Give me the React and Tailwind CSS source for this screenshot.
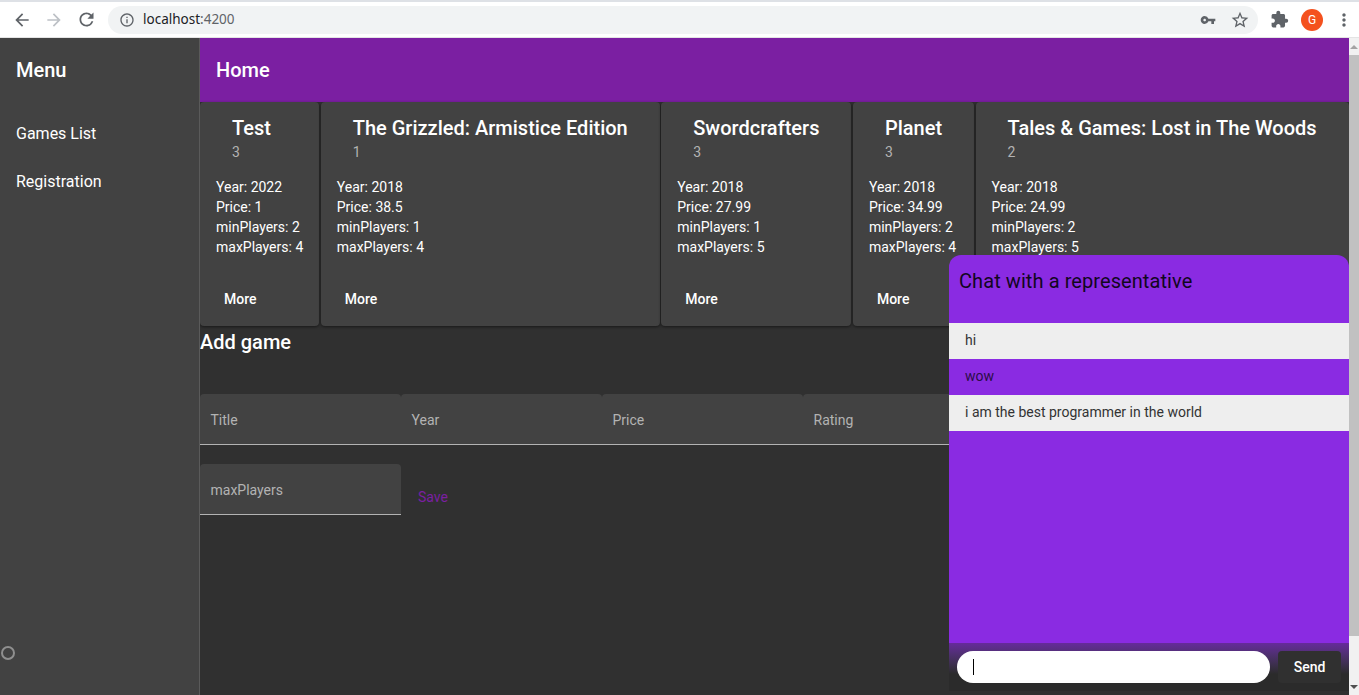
import React from 'react';
import { MdArrowBack, MdArrowForward, MdRefresh, MdInfoOutline, MdVpnKey, MdStarBorder, MdExtension, MdMoreVert } from 'react-icons/md';

const games = [
  { title: 'Test', rating: 3, year: 2022, price: 1, min: 2, max: 4 },
  { title: 'The Grizzled: Armistice Edition', rating: 1, year: 2018, price: 38.5, min: 1, max: 4 },
  { title: 'Swordcrafters', rating: 3, year: 2018, price: 27.99, min: 1, max: 5 },
  { title: 'Planet', rating: 3, year: 2018, price: 34.99, min: 2, max: 4 },
  { title: 'Tales & Games: Lost in The Woods', rating: 2, year: 2018, price: 24.99, min: 2, max: 5 },
];

function BrowserBar() {
  return (
    <div className="h-[38px] shrink-0 bg-white border-t-2 border-b border-t-[#dee1e6] border-b-[#e4e4e4] flex items-center text-[#5f6368]">
      <MdArrowBack className="ml-[12px] text-[20px]" />
      <MdArrowForward className="ml-[12px] text-[20px] text-[#bdc1c6]" />
      <MdRefresh className="ml-[12px] text-[21px]" />
      <div className="ml-[11px] w-[1150px] h-[28px] bg-[#f1f3f4] rounded-full flex items-center pl-[11px] pr-[8px]">
        <MdInfoOutline className="text-[16px]" />
        <span className="ml-[8px] text-[13.5px] font-['Noto_Sans',sans-serif] text-[#202124]">
          localhost<span className="text-[#5f6368]">:4200</span>
        </span>
        <MdVpnKey className="ml-auto text-[16px]" />
        <MdStarBorder className="ml-[14px] text-[20px]" />
      </div>
      <MdExtension className="ml-[12px] text-[19px]" />
      <div className="ml-[12px] w-[22px] h-[22px] rounded-full bg-[#f4511e] text-white text-[12px] flex items-center justify-center font-['Roboto',sans-serif]">G</div>
      <MdMoreVert className="ml-[11px] text-[20px]" />
    </div>
  );
}

function Sidebar() {
  return (
    <aside className="relative w-[200px] shrink-0 bg-[#424242] border-r border-[#5a5a5a] text-white">
      <div className="h-[64px] flex items-center px-4 text-[20px] font-medium">Menu</div>
      <nav className="pt-2 text-[16px]">
        <div className="h-[48px] flex items-center px-4">Games List</div>
        <div className="h-[48px] flex items-center px-4">Registration</div>
      </nav>
      <div className="absolute left-[1px] top-[608px] w-[14px] h-[14px] rounded-full border-2 border-[#8f8f8f]"></div>
    </aside>
  );
}

function GameCard({ game, last }) {
  return (
    <div className={`h-[224px] bg-[#424242] rounded-[4px] shadow-[0_1px_3px_rgba(0,0,0,0.5)] p-4 pt-[14px] flex flex-col ${last ? 'flex-1' : ''}`}>
      <div className="ml-4 pr-4 whitespace-nowrap">
        <div className="text-[20px] leading-[24px] font-medium text-white">{game.title}</div>
        <div className="mt-[2px] text-[14px] leading-[20px] text-[#b3b3b3]">{game.rating}</div>
      </div>
      <div className="mt-[15px] text-[14px] leading-[20px] text-white whitespace-nowrap">
        <div>Year: {game.year}</div>
        <div>Price: {game.price}</div>
        <div>minPlayers: {game.min}</div>
        <div>maxPlayers: {game.max}</div>
      </div>
      <div className="mt-auto mb-[-7px] pl-2 h-[36px] flex items-center text-[14px] font-medium text-white">More</div>
    </div>
  );
}

function Field({ label }) {
  return (
    <div className="w-[201px] h-[51px] shrink-0 bg-[#424242] rounded-t-[4px] border-b border-[#b3b3b3] flex items-center px-[10.5px] pt-[3px] text-[14px] text-[#b3b3b3]">
      {label}
    </div>
  );
}

function Chat() {
  return (
    <div className="absolute left-[749px] top-[217px] w-[400px] h-[436px] rounded-t-[12px] bg-[#8a2be2] flex flex-col overflow-hidden">
      <div className="h-[68px] shrink-0 pl-[10px] pt-[12px] text-[20px] leading-[28px] tracking-[0.08px] text-[#12061e]">Chat with a representative</div>
      <div className="flex-1 text-[14px]">
        <div className="h-[36px] flex items-center px-4 pb-[2px] bg-[#eeeeee] text-[#333333]">hi</div>
        <div className="h-[36px] flex items-center px-4 pb-[2px] text-[#2a0d47]">wow</div>
        <div className="h-[36px] flex items-center px-4 pb-[2px] bg-[#eeeeee] text-[#333333]">i am the best programmer in the world</div>
      </div>
      <div className="h-[48px] shrink-0 bg-gradient-to-b from-[#662a9c] to-[#2b2b2b] to-[65%] flex items-start gap-2 pt-2 px-2">
        <div className="flex-1 h-[32px] rounded-full bg-white flex items-center pl-4">
          <span className="w-px h-[16px] bg-black"></span>
        </div>
        <div className="w-[63px] h-[32px] rounded-[4px] bg-[#303030] flex items-center justify-center text-[14px] font-medium text-white">Send</div>
      </div>
    </div>
  );
}

function Scrollbar() {
  return (
    <div className="w-[10px] shrink-0 bg-[#f1f1f1] flex flex-col items-center">
      <div className="h-[17px] flex items-center justify-center">
        <div className="w-0 h-0 border-x-[4px] border-x-transparent border-b-[4px] border-b-[#a3a3a3]"></div>
      </div>
      <div className="w-full h-[581px] bg-[#c1c1c1]"></div>
      <div className="mt-auto h-[17px] flex items-center justify-center">
        <div className="w-0 h-0 border-x-[4px] border-x-transparent border-t-[4px] border-t-[#505050]"></div>
      </div>
    </div>
  );
}

export default function App() {
  return (
    <div className="h-[695px] flex flex-col overflow-hidden font-['Roboto',sans-serif]">
      <BrowserBar />
      <div className="flex-1 flex min-h-0">
        <Sidebar />
        <main className="relative flex-1 min-w-0 bg-[#303030] overflow-hidden">
          <div className="h-[64px] bg-[#7b1fa2] flex items-center px-4 text-[20px] font-medium text-white">Home</div>
          <div className="flex gap-[1.5px]">
            {games.map((g, i) => (
              <GameCard key={g.title} game={g} last={i === games.length - 1} />
            ))}
          </div>
          <h2 className="mt-[2px] text-[20px] leading-[28px] font-medium text-white">Add game</h2>
          <div className="mt-[38px] flex">
            {['Title', 'Year', 'Price', 'Rating'].map((f) => (
              <Field key={f} label={f} />
            ))}
          </div>
          <div className="mt-[19px] flex items-center">
            <Field label="maxPlayers" />
            <span className="ml-[17px] mt-[15px] text-[14px] text-[#7b1fa2]">Save</span>
          </div>
          <Chat />
        </main>
        <Scrollbar />
      </div>
    </div>
  );
}
